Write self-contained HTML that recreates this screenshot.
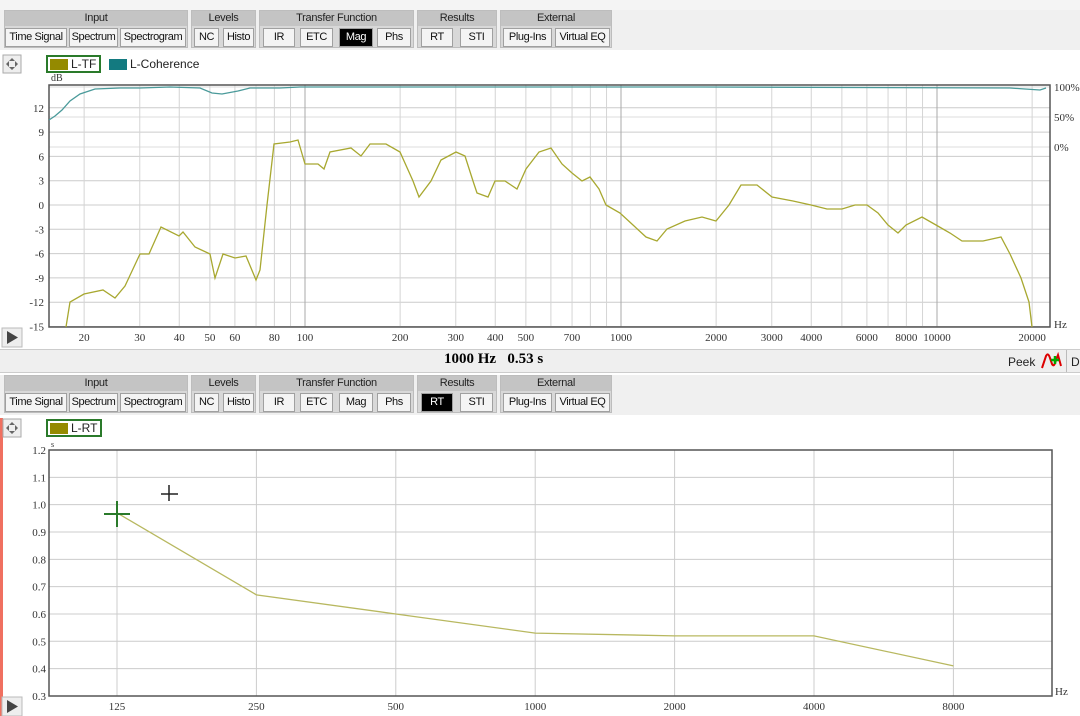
<!DOCTYPE html>
<html><head><meta charset="utf-8"><style>
html,body{margin:0;padding:0;width:1080px;height:716px;overflow:hidden;background:#fff;font-family:"Liberation Sans",sans-serif;}
.tb{position:absolute;left:0;width:1080px;height:40px;background:#f0f0f0;}
.grp{position:absolute;top:0;height:38px;background:#d8d8d8;border:1px solid #bdbdbd;box-sizing:border-box;}
.grp .h{position:absolute;left:0;right:0;top:0;height:15px;background:#c4c4c4;font-size:11px;text-align:center;line-height:15px;color:#222;letter-spacing:-0.3px}
.btn{position:absolute;top:17px;height:19px;background:#f4f4f4;border:1px solid #a0a0a0;box-sizing:border-box;font-size:11px;line-height:17px;text-align:center;color:#111;letter-spacing:-0.4px;white-space:nowrap;overflow:hidden}
.btn.on{background:#000;color:#fff}
svg text{font-family:"Liberation Serif",serif;font-size:11px;fill:#333}
</style></head><body>
<div style="position:absolute;left:0;top:0;width:1080px;height:10px;background:#f4f4f4"></div>
<div class="tb" style="top:10px" id="tb1"></div>
<div class="tb" style="top:375px" id="tb2"></div>
<div style="position:absolute;left:0;top:349px;width:1080px;height:24px;background:#efefef;border-top:1px solid #ccc;border-bottom:1px solid #ccc;box-sizing:border-box"></div>
<div style="position:absolute;left:444px;top:351px;font-family:'Liberation Serif',serif;font-weight:bold;font-size:15px;">1000 Hz&nbsp;&nbsp; 0.53 s</div>
<div style="position:absolute;left:1008px;top:355px;font-size:12px;color:#222">Peek</div>
<svg style="position:absolute;left:1040px;top:352px" width="24" height="18"><path d="M2 16 L6 4 Q8 0 10 6 L12 12 Q14 16 16 8 L18 3 L21 14" stroke="#d00" stroke-width="2" fill="none"/><path d="M15 4v8M11 8h8" stroke="#0a0" stroke-width="2.5"/></svg>
<div style="position:absolute;left:1066px;top:350px;width:1px;height:22px;background:#bbb"></div>
<div style="position:absolute;left:1071px;top:355px;font-size:12px;color:#222">D</div>
<div style="position:absolute;left:0;top:418px;width:3px;height:298px;background:#f07060"></div>
<svg id="s" style="position:absolute;left:0;top:0" width="1080" height="716"></svg>
<script>
const groups=[["Input",4,188,[["Time Signal",5,67],["Spectrum",69,118],["Spectrogram",120,186]]],["Levels",191,256,[["NC",194,219],["Histo",223,254]]],["Transfer Function",259,414,[["IR",263,295],["ETC",300,333],["Mag",339,373],["Phs",377,411]]],["Results",417,497,[["RT",421,453],["STI",460,493]]],["External",500,612,[["Plug-Ins",503,552],["Virtual EQ",555,610]]]];
function tb(id,on){let h='';for(const g of groups){h+=`<div class="grp" style="left:${g[1]}px;width:${g[2]-g[1]}px"><div class="h">${g[0]}</div>`;for(const b of g[3]){h+=`<div class="btn${b[0]==on?' on':''}" style="left:${b[1]-g[1]-1}px;width:${b[2]-b[1]}px">${b[0]}</div>`}h+='</div>'}document.getElementById(id).innerHTML=h}
tb('tb1','Mag');tb('tb2','RT');
let s='';
const X=f=>305+(Math.log10(f)-2)*316;
// top plot
const L=49,R=1050,T=85,B=327;
for(let d=12;d>=-15;d-=3){const y=205-d*8.1;s+=`<line x1="${L}" x2="${R}" y1="${y}" y2="${y}" stroke="#ccc"/><text x="${L-5}" y="${y+4}" text-anchor="end">${d}</text>`}
[87,117,147].forEach((y,i)=>{s+=`<line x1="${L}" x2="${R}" y1="${y}" y2="${y}" stroke="#ddd"/><text x="${R+4}" y="${y+4}">${['100%','50%','0%'][i]}</text>`});
for(let dec=10;dec<=10000;dec*=10)for(let m=1;m<10;m++){const f=dec*m;const x=X(f);if(x<L||x>R)continue;const maj=m==1;s+=`<line x1="${x}" x2="${x}" y1="${T}" y2="${B}" stroke="${maj?'#aaa':'#d4d4d4'}"/>`}
[20,30,40,50,60,80,100,200,300,400,500,700,1000,2000,3000,4000,6000,8000,10000,20000].forEach(f=>{s+=`<text x="${X(f)}" y="341" text-anchor="middle">${f}</text>`});
s+=`<text x="1054" y="328">Hz</text><text x="51" y="81" style="font-size:10px">dB</text>`;
s+=`<rect x="${L}" y="${T}" width="${R-L}" height="${B-T}" fill="none" stroke="#555" stroke-width="1.5"/>`;
s+=`<polyline fill="none" stroke="#4a9a9a" stroke-width="1.3" points="49,120 55,116 62,110 70,101 80,94 95,89 120,88 140,88 170,87 200,88 212,93 222,94 238,91 250,88 280,88 300,87 600,87 700,87 1010,88 1025,89 1040,90 1046,88"/>`;
s+=`<polyline fill="none" stroke="#a8a830" stroke-width="1.3" points="66,327 70,302 84,294 103,290 115,298 125,286 140,254 149,254 161,227 179,236 183,232 195,247 210,254 215,278 223,254 235,258 246,256 256,280 260,270 267,205 274,144 290,142 298,140 305,164 318,164 324,169 330,152 351,148 361,156 370,144 386,144 400,152 413,181 419,197 431,181 441,160 456,152 465,156 473,181 477,193 488,197 495,181 505,181 517,189 526,169 539,152 551,148 562,164 572,173 582,181 590,177 599,189 606,205 620,213 633,225 646,237 657,241 667,229 685,221 702,217 716,221 729,205 741,185 757,185 772,197 793,201 811,205 827,209 842,209 855,205 867,205 878,213 888,225 898,233 906,225 922,217 936,225 950,233 962,241 983,241 1001,237 1010,254 1021,278 1029,302 1032,327"/>`;
// bottom plot
const L2=49,R2=1052,T2=450,B2=696;
const Y=v=>T2+(1.2-v)/0.1*27.33;
for(let i=0;i<=9;i++){const v=1.2-i*0.1;const y=Y(v);s+=`<line x1="${L2}" x2="${R2}" y1="${y}" y2="${y}" stroke="#ccc"/><text x="${L2-3}" y="${y+4}" text-anchor="end">${v.toFixed(1)}</text>`}
const fx=[125,250,500,1000,2000,4000,8000];
fx.forEach((f,i)=>{const x=117+i*139.4;s+=`<line x1="${x}" x2="${x}" y1="${T2}" y2="${B2}" stroke="#ccc"/><text x="${x}" y="710" text-anchor="middle">${f}</text>`});
s+=`<rect x="${L2}" y="${T2}" width="${R2-L2}" height="${B2-T2}" fill="none" stroke="#555" stroke-width="1.5"/><text x="1055" y="695">Hz</text><text x="51" y="447" style="font-size:8px">s</text>`;
const rv=[0.97,0.67,0.60,0.53,0.52,0.52,0.41];
s+=`<polyline fill="none" stroke="#b8b860" stroke-width="1.3" points="${rv.map((v,i)=>(117+i*139.4)+','+Y(v)).join(' ')}"/>`;
s+=`<path d="M104 514h26M117 501v26" stroke="#2a7a2a" stroke-width="2"/><path d="M161 494h17M169 485v16" stroke="#222" stroke-width="1.5"/>`;
// legends / misc
function leg(y,items){let x=47;items.forEach((it,i)=>{if(i==0){s+=`<rect x="${x}" y="${y}" width="${it[2]}" height="16" fill="#fff" stroke="#2a7a2a" stroke-width="2"/>`}s+=`<rect x="${x+3}" y="${y+3}" width="18" height="11" fill="${it[1]}"/><text x="${x+24}" y="${y+12}" style="font-family:'Liberation Sans';font-size:12px;fill:#222">${it[0]}</text>`;x+=it[2]+6})}
leg(56,[["L-TF","#948a00",53],["L-Coherence","#137a80",100]]);
leg(420,[["L-RT","#948a00",54]]);
function mv(y){s+=`<rect x="3" y="${y}" width="18" height="18" fill="#eee" stroke="#aaa"/><path d="M12 ${y+3}l-3 3h6z M12 ${y+15}l-3 -3h6z M6 ${y+9}l3 -3v6z M18 ${y+9}l-3 -3v6z" fill="#666"/>`}
mv(55);mv(419);
function pl(y){s+=`<rect x="2" y="${y}" width="20" height="19" fill="#eee" stroke="#bbb"/><path d="M7 ${y+3}v13l11 -6.5z" fill="#444"/>`}
pl(328);pl(697);
document.getElementById('s').innerHTML=s;
</script>
</body></html>
